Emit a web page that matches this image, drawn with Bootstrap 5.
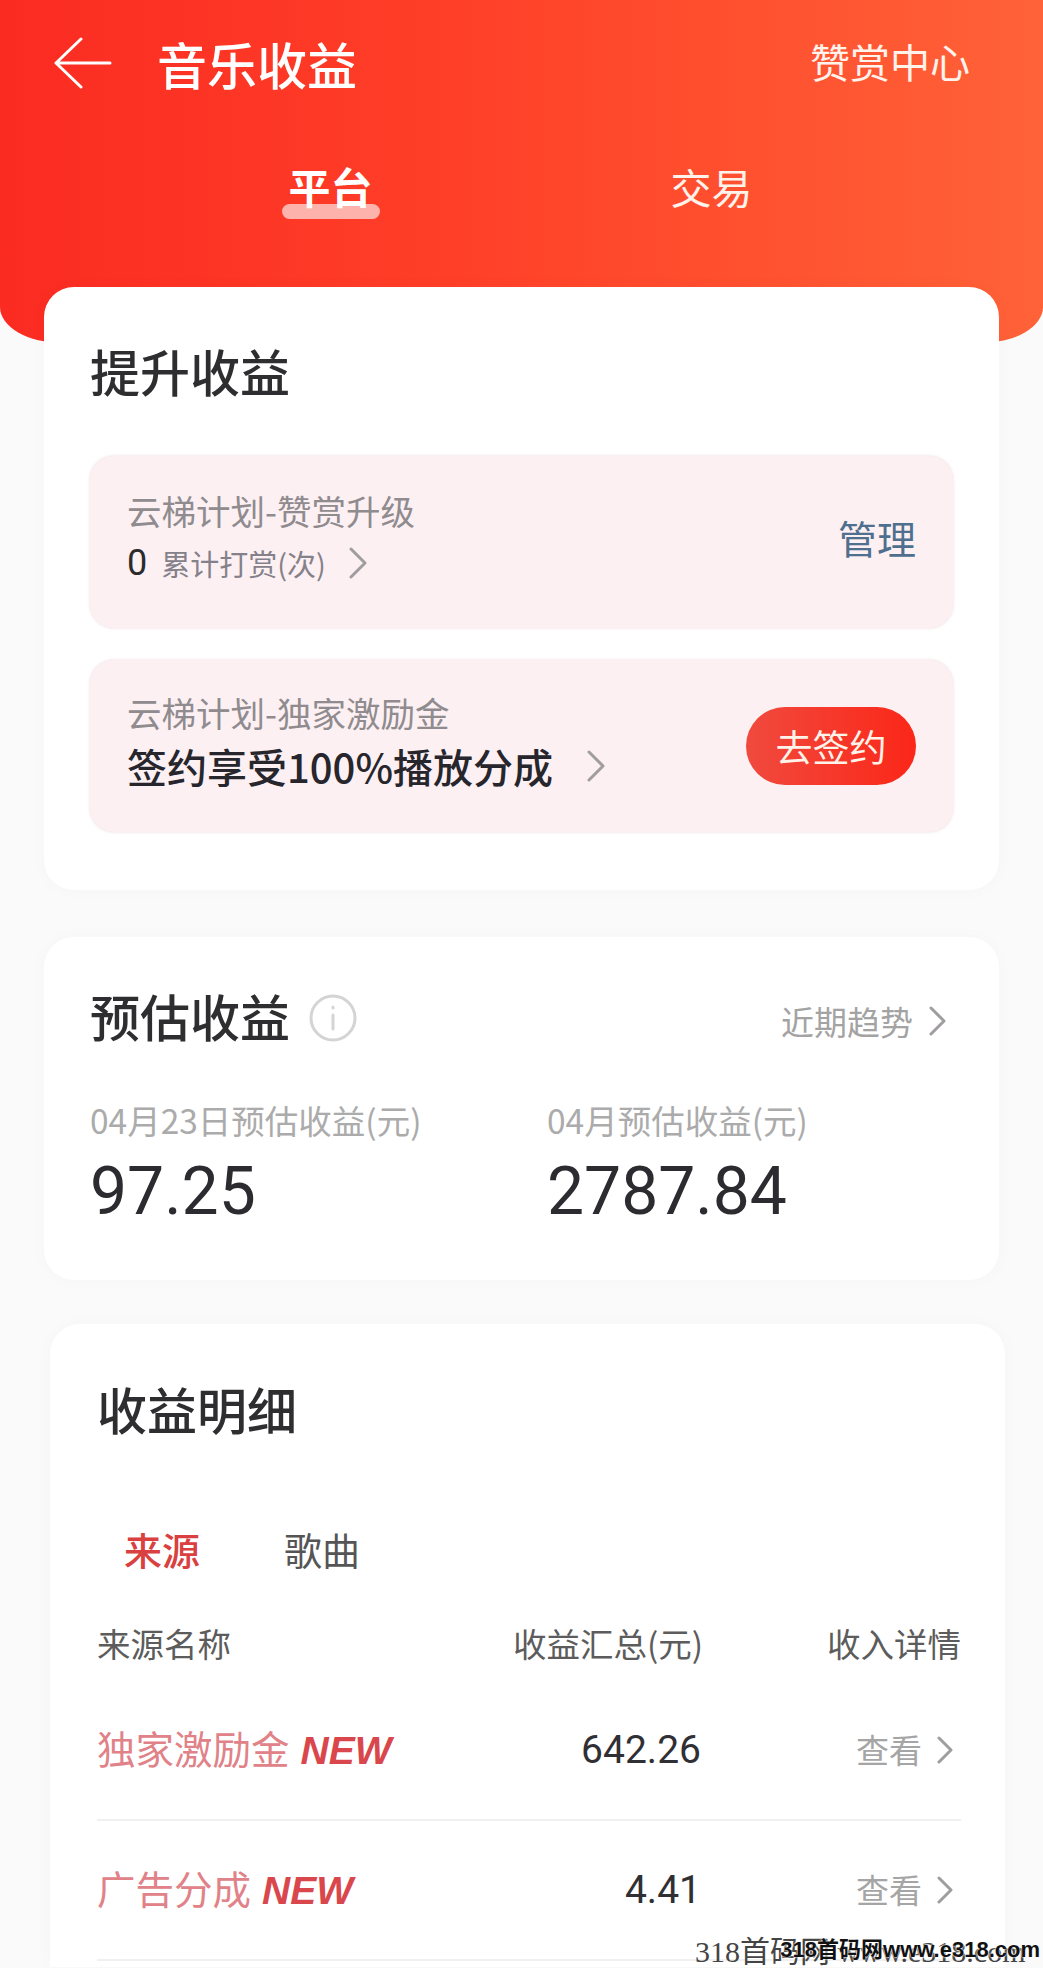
<!DOCTYPE html>
<html lang="zh-CN">
<head>
    <meta charset="UTF-8">
    <meta name="viewport" content="width=device-width, initial-scale=1.0">
    <title>音乐收益</title>
    <link href="https://cdn.jsdelivr.net/npm/bootstrap@5.3.0/dist/css/bootstrap.min.css" rel="stylesheet">
    <style>
        html, body { height: 1968px; overflow: hidden; }
        body {
            background: #fafafa;
            color: #2b2b2e;
            font-family: "Noto Sans CJK SC", "Liberation Sans", sans-serif;
            position: relative;
        }
        .num { font-family: Roboto, "Noto Sans CJK SC", sans-serif; }

        /* red header */
        .hero {
            height: 343px;
            background: linear-gradient(90deg, #fb2b22 0%, #ff4028 45%, #ff6238 100%);
            border-radius: 0 0 62px 62px / 0 0 36px 36px;
            color: #fff;
        }
        .topbar { height: 126px; padding: 0 73px 0 54px; }
        .back-arrow { width: 58px; height: 52px; margin-right: 45px; }
        .page-title { font-size: 50px; font-weight: 500; line-height: 60px; }
        .reward-link { font-size: 40px; line-height: 50px; color: #fff3ec; margin-bottom: 4px; }
        .hero-tabs { padding: 33px 0 0 140px; }
        .hero-tab { width: 381px; text-align: center; font-size: 41px; line-height: 54px; color: #fff2ea; }
        .hero-tab.on { font-weight: 700; font-size: 42px; color: #fff; }
        .tab-mark { display: block; width: 98px; height: 15px; margin: -9px auto 0; background: #fdb3ab; border-radius: 8px; }

        /* white panels */
        .panel {
            background: #fff;
            border: 0;
            border-radius: 30px;
            box-shadow: 0 0 18px rgba(0, 0, 0, .025);
        }
        .panel-lift { margin: -56px 44px 0; height: 603px; padding: 51px 46px 0; }
        .panel-title { font-size: 50px; font-weight: 500; line-height: 64px; margin: 0; color: #2e2e30; }

        .plan-box {
            height: 172px;
            background: #fdf0f3;
            border-radius: 24px;
            box-shadow: 0 0 3px rgba(190, 140, 150, .35);
            padding: 0 37px;
        }
        .plan-list { margin-top: 54px; }
        .plan-box + .plan-box { margin-top: 32px; }
        .plan-text { margin-bottom: 12px; }
        .plan-name { font-size: 34.5px; line-height: 48px; color: #8f8b8e; }
        .plan-count { font-size: 36px; line-height: 48px; margin-top: 5px; }
        .plan-unit { font-size: 29px; color: #85818a; margin-left: 14px; }
        .plan-count svg { margin-left: 23px; }
        .plan-strong { font-size: 40px; font-weight: 500; line-height: 52px; color: #26262c; margin-top: 4px; }
        .plan-strong svg { margin-left: 33px; }
        .manage-link { font-size: 39px; color: #4f6f8e; margin-bottom: 10px; }
        .sign-btn {
            width: 170px; height: 78px; padding: 0;
            font-size: 37px; line-height: 1;
            color: #fff2e8;
            background: linear-gradient(90deg, #f04a3e, #fb2718);
            border: 0;
            border-radius: 39px;
        }
        .chev { fill: none; stroke: #a09da0; stroke-width: 3; stroke-linecap: round; stroke-linejoin: round; }

        .panel-est { margin: 47px 44px 0; height: 343px; padding: 46px 46px 0; }
        .info-ico { width: 48px; height: 48px; margin: 11px 0 0 19px; }
        .trend-link { font-size: 33px; color: #a3a3a3; line-height: 44px; margin-top: 16px; padding-right: 6px; }
        .est-cols { margin-top: 53px; }
        .est-col { flex: 0 0 457px; }
        .est-label { font-size: 33.5px; line-height: 40px; color: #ababab; white-space: nowrap; }
        .est-value { font-size: 66px; line-height: 80px; color: #2c2c30; margin-top: 12px; }

        .panel-detail {
            margin: 44px 38px 0 50px;
            height: 643px;
            padding: 52px 44px 0 47px;
            border-radius: 30px 30px 0 0;
        }
        .sub-tabs { margin-top: 84px; gap: 84px; padding-left: 27px; font-size: 38px; line-height: 50px; color: #555; }
        .sub-tabs .on { color: #d9403f; font-weight: 500; }
        .grid-row { display: grid; grid-template-columns: 416px 188px 260px; align-items: center; }
        .grid-head { margin-top: 44px; height: 50px; font-size: 33.5px; color: #5c5c5c; margin-bottom: 13px; white-space: nowrap; }
        .grid-item { height: 140px; border-bottom: 2px solid #f0f0f0; }
        .src-name { font-size: 38.5px; color: #e08288; white-space: nowrap; }
        .src-new { font-family: "Liberation Sans", sans-serif; font-size: 39px; font-weight: 700; font-style: italic; color: #d9474d; margin-left: 11px; }
        .src-sum { font-size: 39px; text-align: right; color: #303034; }
        .src-view { font-size: 33px; color: #a5a5a5; justify-content: flex-end; gap: 15px; padding-right: 8px; }
        .t-right { text-align: right; }

        /* site mark stamped over the bottom corner */
        .stamp { position: absolute; white-space: nowrap; }
        .stamp-thin { left: 695px; top: 1934px; font-family: "Liberation Serif", "Noto Sans CJK SC", serif; font-size: 30px; line-height: 36px; color: #444; }
        .stamp-bold { right: 3px; top: 1937px; font-family: "Liberation Sans", "Noto Sans CJK SC", sans-serif; font-size: 22px; font-weight: 700; line-height: 26px; color: #111; text-shadow: 0 0 2px #fff, 0 0 2px #fff; }
    </style>
</head>
<body>
    <header class="hero">
        <div class="topbar d-flex align-items-center">
            <svg class="back-arrow" viewBox="0 0 58 52" fill="none" stroke="#fff" stroke-width="3" stroke-linecap="round" stroke-linejoin="round">
                <path d="M27 2 2 26l25 24M2 26h54"/>
            </svg>
            <div class="page-title">音乐收益</div>
            <div class="reward-link ms-auto">赞赏中心</div>
        </div>
        <div class="hero-tabs d-flex">
            <div class="hero-tab on"><span>平台</span><span class="tab-mark"></span></div>
            <div class="hero-tab">交易</div>
        </div>
    </header>

    <section class="panel panel-lift card">
        <h2 class="panel-title">提升收益</h2>
        <div class="plan-list">
            <div class="plan-box d-flex align-items-center justify-content-between">
                <div class="plan-text">
                    <div class="plan-name">云梯计划-赞赏升级</div>
                    <div class="plan-count d-flex align-items-center">
                        <span class="num">0</span><span class="plan-unit">累计打赏(次)</span>
                        <svg width="18" height="32" viewBox="0 0 18 32"><path class="chev" d="M2 2l14 14L2 30"/></svg>
                    </div>
                </div>
                <div class="manage-link">管理</div>
            </div>
            <div class="plan-box d-flex align-items-center justify-content-between">
                <div class="plan-text">
                    <div class="plan-name">云梯计划-独家激励金</div>
                    <div class="plan-strong d-flex align-items-center">
                        签约享受100%播放分成
                        <svg width="20" height="32" viewBox="0 0 20 32"><path class="chev" d="M3 2l14 14L3 30"/></svg>
                    </div>
                </div>
                <button class="btn sign-btn" type="button">去签约</button>
            </div>
        </div>
    </section>

    <section class="panel panel-est card">
        <div class="d-flex align-items-start">
            <h2 class="panel-title">预估收益</h2>
            <svg class="info-ico" viewBox="0 0 48 48" fill="none" stroke="#d4d4d4" stroke-width="3" stroke-linecap="round">
                <circle cx="24" cy="24" r="22"/>
                <path d="M24 21v14M24 13v1"/>
            </svg>
            <div class="trend-link ms-auto d-flex align-items-center gap-3">
                近期趋势
                <svg width="18" height="30" viewBox="0 0 18 30"><path class="chev" d="M2 2l13 13L2 28"/></svg>
            </div>
        </div>
        <div class="est-cols d-flex">
            <div class="est-col">
                <div class="est-label">04月23日预估收益(元)</div>
                <div class="est-value num">97.25</div>
            </div>
            <div class="est-col">
                <div class="est-label">04月预估收益(元)</div>
                <div class="est-value num">2787.84</div>
            </div>
        </div>
    </section>

    <section class="panel panel-detail card">
        <h2 class="panel-title">收益明细</h2>
        <div class="sub-tabs d-flex">
            <div class="on">来源</div>
            <div>歌曲</div>
        </div>
        <div class="grid-row grid-head">
            <div>来源名称</div>
            <div class="t-right">收益汇总(元)</div>
            <div class="t-right">收入详情</div>
        </div>
        <div class="grid-row grid-item">
            <div class="src-name">独家激励金<span class="src-new">NEW</span></div>
            <div class="src-sum num">642.26</div>
            <div class="src-view d-flex align-items-center">查看
                <svg width="16" height="28" viewBox="0 0 16 28"><path class="chev" d="M2 2l12 12L2 26"/></svg>
            </div>
        </div>
        <div class="grid-row grid-item">
            <div class="src-name">广告分成<span class="src-new">NEW</span></div>
            <div class="src-sum num">4.41</div>
            <div class="src-view d-flex align-items-center">查看
                <svg width="16" height="28" viewBox="0 0 16 28"><path class="chev" d="M2 2l12 12L2 26"/></svg>
            </div>
        </div>
    </section>

    <div class="stamp stamp-thin">318首码网 www.e318.com</div>
    <div class="stamp stamp-bold">318首码网www.e318.com</div>

    <script src="https://cdn.jsdelivr.net/npm/bootstrap@5.3.0/dist/js/bootstrap.bundle.min.js"></script>
</body>
</html>
